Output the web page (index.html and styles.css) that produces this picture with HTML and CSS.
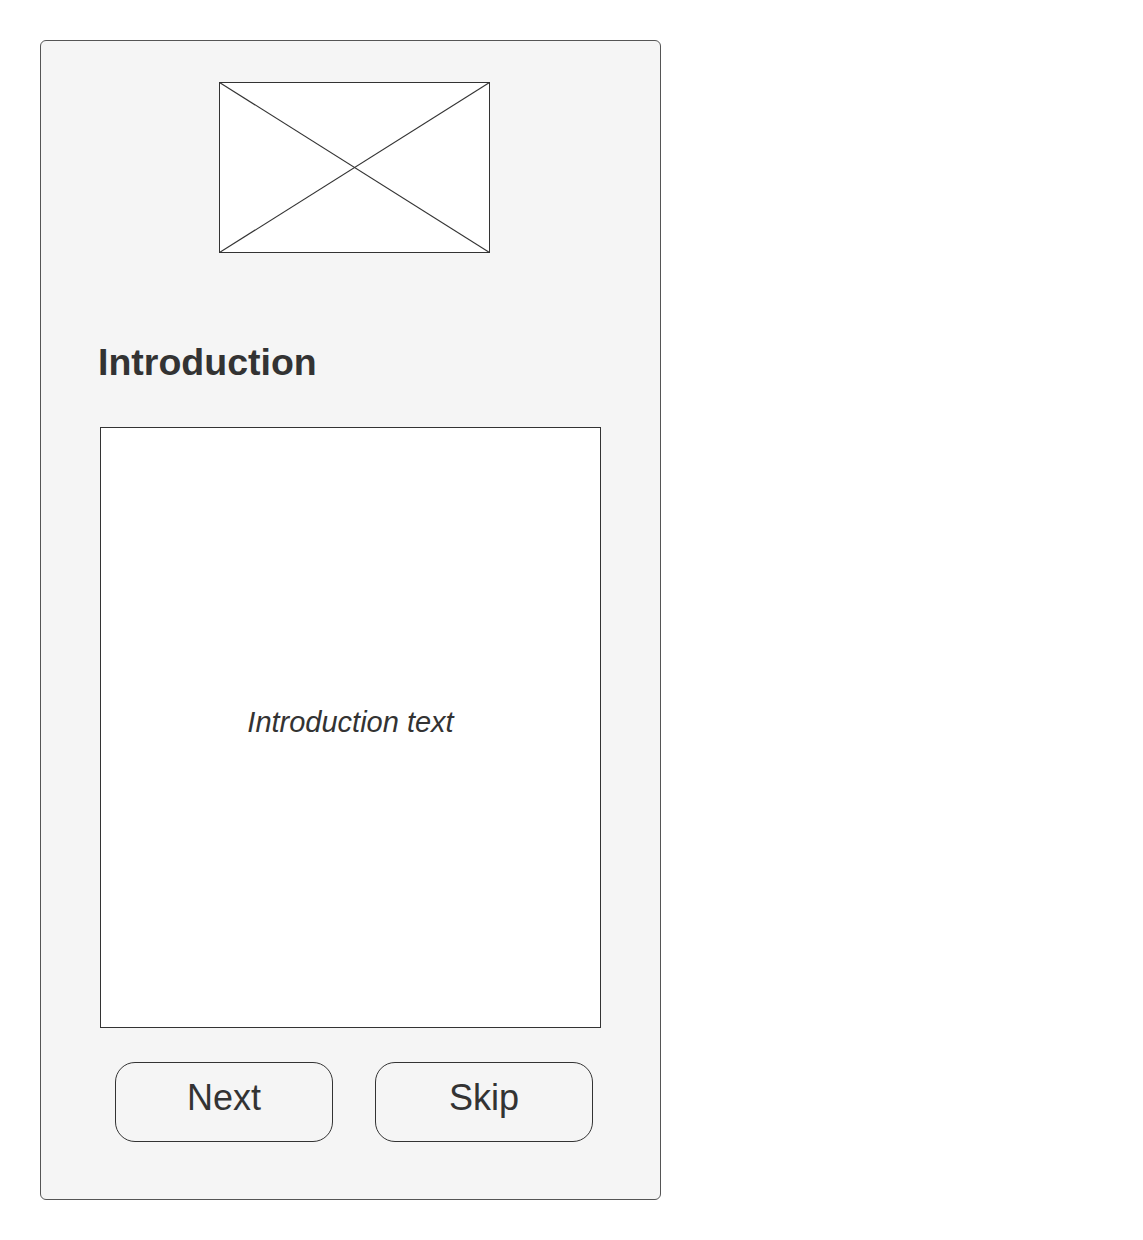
FILE: index.html
```html
<!DOCTYPE html>
<html lang="en">
<head>
<meta charset="utf-8">
<title>Introduction</title>
<link rel="stylesheet" href="styles.css">
</head>
<body>
  <div class="card">
    <div class="placeholder">
      <svg width="271" height="171" viewBox="0 0 271 171" xmlns="http://www.w3.org/2000/svg">
        <rect x="0.5" y="0.5" width="270" height="170" fill="#ffffff" stroke="#333333" stroke-width="1"/>
        <line x1="0.5" y1="0.5" x2="270.5" y2="170.5" stroke="#333333" stroke-width="1.1"/>
        <line x1="270.5" y1="0.5" x2="0.5" y2="170.5" stroke="#333333" stroke-width="1.1"/>
      </svg>
    </div>
    <h1 class="title">Introduction</h1>
    <div class="textbox"><span class="intro-text">Introduction text</span></div>
    <div class="actions">
      <button class="btn">Next</button>
      <button class="btn">Skip</button>
    </div>
  </div>
</body>
</html>
```
FILE: styles.css
```css
html, body {
  margin: 0;
  padding: 0;
  background: #ffffff;
}
body {
  padding: 40px;
  font-family: "Liberation Sans", Arial, sans-serif;
  color: #333333;
}
.card {
  box-sizing: border-box;
  width: 621px;
  height: 1160px;
  border: 1px solid #555555;
  border-radius: 6px;
  background: #f5f5f5;
  display: flex;
  flex-direction: column;
  align-items: flex-start;
}
.placeholder {
  margin-top: 41px;
  margin-left: 178px;
  width: 271px;
  height: 171px;
  display: block;
}
.placeholder svg {
  display: block;
}
.title {
  margin: 88px 0 0 57px;
  font-size: 37.5px;
  line-height: 42px;
  font-weight: bold;
  color: #333333;
}
.textbox {
  box-sizing: border-box;
  margin: 44px 0 0 59px;
  width: 501px;
  height: 601px;
  background: #ffffff;
  border: 1px solid #333333;
  display: flex;
  align-items: center;
  justify-content: center;
  padding-bottom: 10px;
}
.intro-text {
  font-style: italic;
  font-size: 29px;
  color: #333333;
}
.actions {
  margin: 34px 0 0 74px;
  display: flex;
  gap: 42px;
}
.btn {
  box-sizing: border-box;
  width: 218px;
  height: 80px;
  border: 1px solid #333333;
  border-radius: 20px;
  background: #f5f5f5;
  font-family: "Liberation Sans", Arial, sans-serif;
  font-size: 36px;
  color: #333333;
  padding: 0 0 8px 0;
  cursor: pointer;
}
```
